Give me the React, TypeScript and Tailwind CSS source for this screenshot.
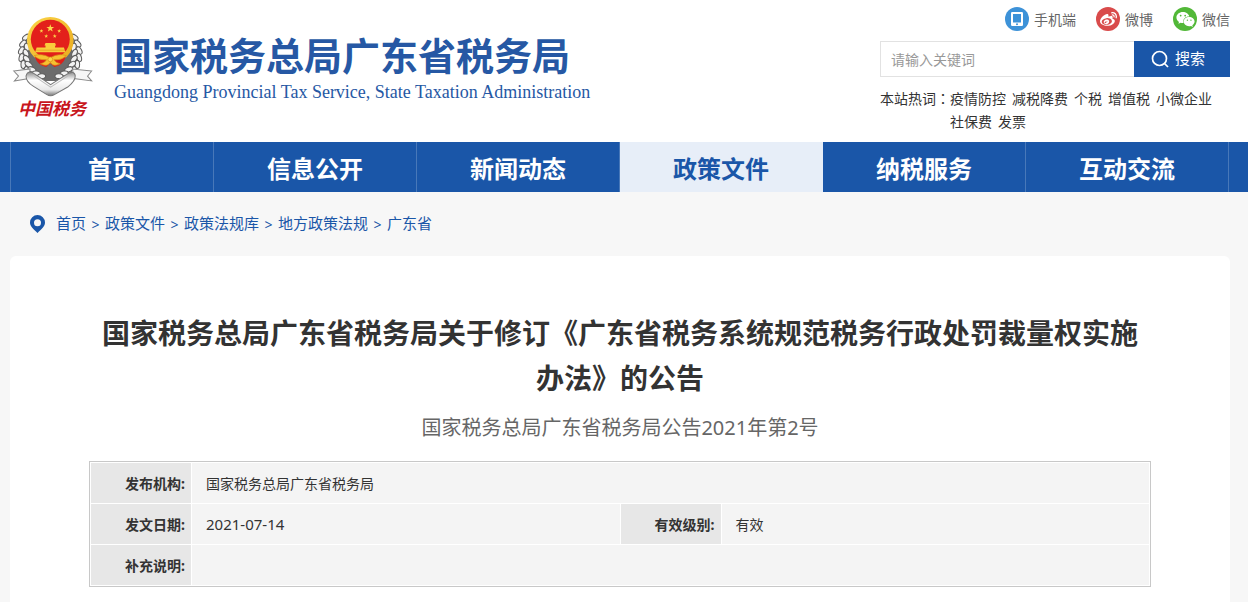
import { FaWeibo, FaWeixin } from "react-icons/fa";

const navItems = ["首页", "信息公开", "新闻动态", "政策文件", "纳税服务", "互动交流"];
const crumbs = ["首页", "政策文件", "政策法规库", "地方政策法规", "广东省"];
const hotWords = ["疫情防控", "减税降费", "个税", "增值税", "小微企业", "社保费", "发票"];

const starPoints = (cx: number, cy: number, r: number) =>
  Array.from({ length: 10 }, (_, i) => {
    const a = (Math.PI / 5) * i - Math.PI / 2;
    const d = i % 2 === 0 ? r : r * 0.4;
    return `${cx + d * Math.cos(a)},${cy + d * Math.sin(a)}`;
  }).join(" ");

const leaves = [-1, 1].flatMap((side) =>
  [0, 1, 2, 3, 4, 5, 6, 7].flatMap((i) =>
    [85, 71].map((r, row) => {
      const deg = -34 + i * 14 + row * 5;
      const a = (deg * Math.PI) / 180;
      return {
        x: 151 + side * r * Math.cos(a),
        y: 132 + r * Math.sin(a),
        rot: side * (deg + (row === 0 ? 68 : 116)),
      };
    }),
  ),
);

function Emblem() {
  return (
    <svg viewBox="36 22 240 240" className="h-[82px] w-[82px]" role="img" aria-label="中国税务">
      <defs>
        <linearGradient id="ribbon" x1="0" y1="0" x2="0" y2="1">
          <stop offset="0" stopColor="#8e8e8e" />
          <stop offset="0.35" stopColor="#ffffff" />
          <stop offset="0.75" stopColor="#e8e8e8" />
          <stop offset="1" stopColor="#777777" />
        </linearGradient>
        <linearGradient id="gold" x1="0" y1="0" x2="1" y2="1">
          <stop offset="0" stopColor="#fbd64a" />
          <stop offset="1" stopColor="#e9a91c" />
        </linearGradient>
      </defs>
      <path d="M76 90 Q72 180 120 212 L182 212 Q230 180 226 90 Z" fill="#6c6c6c" />
      {leaves.map((l, i) => (
        <ellipse
          key={i}
          cx={l.x}
          cy={l.y}
          rx={12}
          ry={7}
          fill="#f2f2f2"
          stroke="#5c5c5c"
          strokeWidth={3}
          transform={`rotate(${l.rot} ${l.x} ${l.y})`}
        />
      ))}
      <circle cx="151" cy="93" r="68" fill="url(#gold)" />
      <circle cx="151" cy="90" r="57" fill="#e3201b" />
      <path d="M106 143 Q151 130 196 143 Q188 167 163 171 L151 160 L139 171 Q114 167 106 143Z" fill="#dc1f1a" />
      <polygon points={starPoints(151, 58, 12)} fill="#fbd64a" />
      <polygon points={starPoints(125, 66, 6)} fill="#fbd64a" />
      <polygon points={starPoints(177, 66, 6)} fill="#fbd64a" />
      <polygon points={starPoints(139, 81, 6)} fill="#fbd64a" />
      <polygon points={starPoints(164, 81, 6)} fill="#fbd64a" />
      <path d="M134 108 L137 101 H165 L168 108 H165 V114 H191 L195 128 H107 L111 114 H137 V108Z" fill="#f9cc3c" />
      <path d="M108 122 H194" stroke="#e39a1a" strokeWidth="2" />
      <path d="M104 138 Q128 130 151 144 Q174 130 198 138 Q184 152 162 150 Q168 160 180 162 Q160 172 151 158 Q142 172 122 162 Q134 160 140 150 Q118 152 104 138Z" fill="#f5c231" stroke="#d98c17" strokeWidth="2" />
      <circle cx="151" cy="149" r="7" fill="#fbd64a" stroke="#d98c17" strokeWidth="2" />
      <path d="M44 183 L92 177 L88 205 L46 212 L58 198Z M272 183 L216 177 L220 205 L272 212 L260 198Z" fill="#f6f6f6" stroke="#8a8a8a" strokeWidth="3" />
      <path d="M80 198 Q84 178 106 192 L152 223 L200 192 Q222 180 224 197 Q225 212 202 230 L163 252 Q152 259 141 252 L102 228 Q80 214 80 198Z" fill="url(#ribbon)" stroke="#777777" strokeWidth="3" />
      <path d="M104 198 L152 230 L202 198" fill="none" stroke="#bdbdbd" strokeWidth="3" />
    </svg>
  );
}

function PhoneIcon() {
  return (
    <svg viewBox="0 0 24 24" className="h-6 w-6" aria-hidden="true">
      <circle cx="12" cy="12" r="12" fill="#3d92d8" />
      <path fillRule="evenodd" d="M7.2 5h9.6q1.2 0 1.2 1.2v11.6q0 1.2-1.2 1.2H7.2Q6 19 6 17.800V6.200Q6 5 7.200 5ZM8 7v8.500h8V7Zm4 9.300a1 1 0 1 0 0 2a1 1 0 0 0 0-2Z" fill="#fff" />
    </svg>
  );
}

function Label({ children }: { children: string }) {
  return (
    <th scope="row" className="h-10 w-25 bg-[#e7e7e7] pt-0.5 pr-1.5 text-right font-bold">
      {children}
    </th>
  );
}

export default function App() {
  return (
    <div className="min-h-screen bg-[#f7f7f7] font-['Noto_Sans','Noto_Sans_CJK_SC',sans-serif] text-sm text-[#333]">
      <header className="bg-white">
        <div className="mr-[18px] ml-[10px] flex h-[142px] justify-between">
          <a href="#" className="flex text-[#2658a4]">
            <div className="flex w-[84px] flex-col items-center pt-4">
              <Emblem />
              <span className="font-['Noto_Sans_CJK_SC',sans-serif] text-[17px] leading-5 font-bold text-[#c8161d] italic">中国税务</span>
            </div>
            <div className="pt-7 pl-5">
              <h1 className="font-['Noto_Sans_CJK_SC',sans-serif] text-[38px] leading-[52px] font-bold whitespace-nowrap">国家税务总局广东省税务局</h1>
              <p className="font-['Liberation_Serif',serif] text-lg leading-6 whitespace-nowrap">
                Guangdong Provincial Tax Service, State Taxation Administration
              </p>
            </div>
          </a>
          <div className="w-[350px] pt-[7px]">
            <div className="flex justify-end gap-5 leading-[26px] text-[#666]">
              <a href="#" className="flex h-6 gap-[5px]">
                <PhoneIcon />
                手机端
              </a>
              <a href="#" className="flex h-6 gap-[5px]">
                <span className="flex size-6 items-center justify-center rounded-full bg-[#d94b4b] text-white">
                  <FaWeibo size={17} />
                </span>
                微博
              </a>
              <a href="#" className="flex h-6 gap-[5px]">
                <span className="flex size-6 items-center justify-center rounded-full bg-[#52b838] text-white">
                  <FaWeixin size={19} />
                </span>
                微信
              </a>
            </div>
            <form className="mt-2.5 flex h-9" onSubmit={(e) => e.preventDefault()}>
              <input
                type="text"
                aria-label="请输入关键词"
                placeholder="请输入关键词"
                className="min-w-0 flex-1 border border-r-0 border-[#e2e2e2] bg-white px-2.5 pt-0.5 outline-none placeholder:text-[#999]"
              />
              <button type="submit" className="flex w-24 items-center gap-1.5 bg-[#1a56a8] pl-[17px] text-[15px] text-white">
                <svg viewBox="0 0 18 18" className="size-[18px]" fill="none" stroke="currentColor" strokeWidth="1.7" aria-hidden="true">
                  <circle cx="8.500" cy="8.500" r="7" />
                  <path d="M13.500 13.500L17 17" />
                </svg>
                搜索
              </button>
            </form>
            <dl className="mt-2.5 flex leading-[23px]">
              <dt className="shrink-0">
                本站热词<span className="font-['Noto_Sans_CJK_TC',sans-serif]">：</span>
              </dt>
              <dd className="flex flex-wrap gap-x-1.5">
                {hotWords.map((w) => (
                  <a key={w} href="#">
                    {w}
                  </a>
                ))}
              </dd>
            </dl>
          </div>
        </div>
      </header>

      <nav className="bg-[#1a56a8]">
        <ul className="mr-[19px] ml-[10px] flex h-[50px] border-l border-[#4878b9]">
          {navItems.map((n) => (
            <li key={n} className="flex-1">
              <a
                href="#"
                className={
                  n === "政策文件"
                    ? "block h-full border-r border-[#e7eef8] bg-[#e7eef8] text-center text-2xl leading-[54px] font-bold text-[#1a56a8]"
                    : "block h-full border-r border-[#4878b9] text-center text-2xl leading-[54px] font-bold text-white"
                }
              >
                {n}
              </a>
            </li>
          ))}
        </ul>
      </nav>

      <div className="mr-[18px] ml-[10px]">
        <div className="flex h-16 items-center pl-5 text-[15px] text-[#1a56a8]">
          <svg viewBox="0 0 15 18" className="mr-[11px] h-[18px] w-[15px]" aria-hidden="true">
            <path fillRule="evenodd" d="M7.500 0A7.500 7.500 0 0 1 15 7.500C15 11.500 11.500 14 7.500 18C3.500 14 0 11.500 0 7.500A7.500 7.500 0 0 1 7.500 0ZM7.500 4.200a3.500 3.500 0 1 0 0 7a3.500 3.500 0 0 0 0-7Z" fill="currentColor" />
          </svg>
          <ol className="flex pt-0.5">
            {crumbs.map((c, i) => (
              <li key={c} className="flex">
                {i > 0 && <span className="w-[19px] text-center text-sm leading-6">&gt;</span>}
                <a href="#">{c}</a>
              </li>
            ))}
          </ol>
        </div>

        <main className="min-h-[346px] rounded-t-md bg-white px-[79px] pt-[55px]">
          <h2 className="text-center text-[28px] leading-[45px] font-bold">
            国家税务总局广东省税务局关于修订《广东省税务系统规范税务行政处罚裁量权实施办法》的公告
          </h2>
          <p className="mt-3 text-center text-xl leading-[30px] text-[#666]">国家税务总局广东省税务局公告2021年第2号</p>
          <table className="mt-[18px] w-full table-fixed border-separate border-spacing-px border border-[#c8c8c8]">
            <colgroup>
              <col className="w-25" />
              <col />
              <col className="w-25" />
              <col />
            </colgroup>
            <tbody>
              <tr>
                <Label>发布机构:</Label>
                <td colSpan={3} className="bg-[#f4f4f4] pt-0.5 pl-3.5">国家税务总局广东省税务局</td>
              </tr>
              <tr>
                <Label>发文日期:</Label>
                <td className="bg-[#f4f4f4] pt-0.5 pl-3.5 text-[15px]">2021-07-14</td>
                <Label>有效级别:</Label>
                <td className="bg-[#f4f4f4] pt-0.5 pl-3.5">有效</td>
              </tr>
              <tr>
                <Label>补充说明:</Label>
                <td colSpan={3} className="bg-[#f4f4f4] pl-3.5" />
              </tr>
            </tbody>
          </table>
        </main>
      </div>
    </div>
  );
}
